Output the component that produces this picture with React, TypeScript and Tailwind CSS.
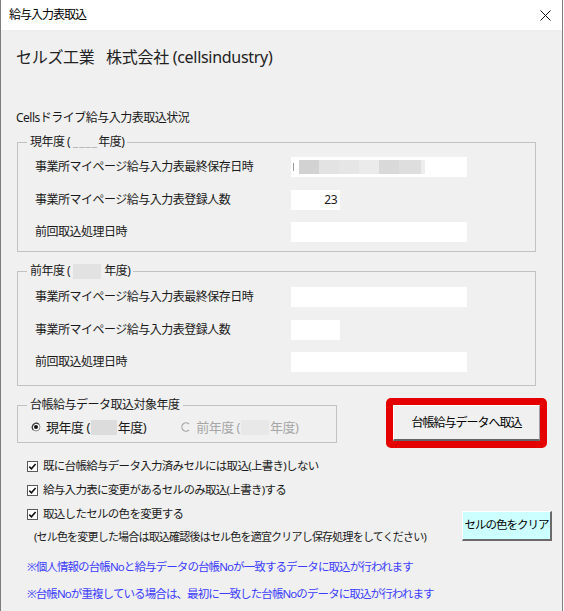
import React, { FC } from 'react';

const CheckIcon: FC = () => (
  <svg width="11" height="11" viewBox="0 0 11 11" className="shrink-0">
    <rect x="0.5" y="0.5" width="10" height="10" fill="#ffffff" stroke="#5a5a5a" />
    <polyline points="2.3,5.6 4.4,7.8 8.6,2.9" fill="none" stroke="#111111" strokeWidth="1.6" />
  </svg>
);

const RadioOn: FC = () => (
  <svg width="10" height="10" viewBox="0 0 10 10" className="shrink-0">
    <circle cx="5" cy="5" r="4" fill="#ffffff" stroke="#8a8a8a" />
    <path d="M 7.8 2.2 A 4 4 0 0 0 2.2 7.8" fill="none" stroke="#3a3a3a" strokeWidth="1.2" />
    <circle cx="5" cy="5" r="2" fill="#111111" />
  </svg>
);

const RadioOff: FC = () => (
  <svg width="10" height="10" viewBox="0 0 10 10" className="shrink-0">
    <path d="M 8 2 A 4.2 4.2 0 1 0 8 8" fill="none" stroke="#a8a8a8" strokeWidth="1.2" />
  </svg>
);

type RowProps = {
  label: string;
  wide?: boolean;
  children?: React.ReactNode;
};

const Row: FC<RowProps> = ({ label, wide = true, children }) => (
  <div className="flex items-center h-[20px]">
    <div className="w-[256px] leading-[16px] whitespace-nowrap">{label}</div>
    <div className={`h-[20px] bg-white flex items-center ${wide ? 'w-[176px]' : 'w-[49px] justify-end pr-[3px]'}`}>
      {children}
    </div>
  </div>
);

const Blur: FC = () => (
  <div className="flex items-center h-[20px] pl-[2px]">
    <div className="w-[1px] h-[8px] bg-[#9a9a9a] mr-[5px]" />
    <div className="flex h-[14px]">
      <div className="w-[20px] bg-[#d2d2d2]" />
      <div className="w-[20px] bg-[#e3e3e3]" />
      <div className="w-[20px] bg-[#e6e6e6]" />
      <div className="w-[20px] bg-[#ebebeb]" />
      <div className="w-[20px] bg-[#d9d9d9]" />
      <div className="w-[22px] bg-[#dedede]" />
      <div className="w-[4px] bg-[#eeeeee]" />
    </div>
  </div>
);

const App: FC = () => {
  return (
    <div className="w-[563px] h-[611px] overflow-hidden border-x border-[#7d7d7d] bg-[#f0f0f0] flex flex-col text-[12px] text-[#1a1a1a] tracking-[-0.5px] font-['Noto_Sans','Noto_Sans_CJK_JP',sans-serif]">
      <div className="h-[30px] shrink-0 bg-white flex items-center justify-between pl-[8px] pr-[11px]">
        <span className="text-[12px] text-black tracking-[-1px]">給与入力表取込</span>
        <svg width="11" height="11" viewBox="0 0 11 11">
          <path d="M0.5 0.5 L10.5 10.5 M10.5 0.5 L0.5 10.5" stroke="#111111" strokeWidth="1" />
        </svg>
      </div>

      <div className="flex flex-col px-[15px]">
        <div className="pt-[17px] text-[16px] leading-[20px] text-[#222] tracking-[-0.3px] whitespace-pre">
          {'セルズ工業   株式会社 (cellsindustry)'}
        </div>

        <div className="mt-[43px] leading-[16px]">Cellsドライブ給与入力表取込状況</div>

        <fieldset className="mt-[8px] ml-[1px] w-[519px] border border-[#c2c2c2] p-0">
          <legend className="ml-[9px] px-[3px] leading-[16px] whitespace-pre">
            {'現年度 ( '}<span className="text-[#b0b0b0] tracking-[1px]">____</span>年度)
          </legend>
          <div className="flex flex-col gap-[12.5px] pl-[17px] pt-[7px] pb-[9px]">
            <Row label="事業所マイページ給与入力表最終保存日時">
              <Blur />
            </Row>
            <Row label="事業所マイページ給与入力表登録人数" wide={false}>
              23
            </Row>
            <Row label="前回取込処理日時" />
          </div>
        </fieldset>

        <fieldset className="mt-[11px] ml-[1px] w-[519px] border border-[#c2c2c2] p-0">
          <legend className="ml-[9px] px-[3px] leading-[16px] flex items-center whitespace-pre">
            {'前年度 ('}<span className="inline-block w-[28px] h-[15px] bg-[#e2e2e2] mx-[3px]" />年度)
          </legend>
          <div className="flex flex-col gap-[12.5px] pl-[17px] pt-[8px] pb-[13px]">
            <Row label="事業所マイページ給与入力表最終保存日時" />
            <Row label="事業所マイページ給与入力表登録人数" wide={false} />
            <Row label="前回取込処理日時" />
          </div>
        </fieldset>

        <div className="mt-[11px] flex items-start">
          <fieldset className="ml-[1px] w-[327px] border border-[#c2c2c2] p-0">
            <legend className="ml-[9px] px-[3px] leading-[16px]">台帳給与データ取込対象年度</legend>
            <div className="flex items-center pl-[13px] pt-[6px] pb-[7px] leading-[16px] text-[13px] whitespace-pre">
              <RadioOn />
              <span className="ml-[5px] flex items-center">
                {'現年度 ('}<span className="inline-block w-[26px] h-[15px] bg-[#dcdcdc] mx-[1px]" />年度)
              </span>
              <span className="ml-[35px] flex items-center text-[#a6a6a6]">
                <RadioOff />
                <span className="ml-[5px] flex items-center">
                  {'前年度 ('}<span className="inline-block w-[28px] h-[15px] bg-[#e8e8e8] mx-[1px]" />年度)
                </span>
              </span>
            </div>
          </fieldset>

          <div className="ml-[49px] mt-[1px] w-[164px] h-[50px] rounded-[5px] bg-[#e50000] p-[7px]">
            <button
              type="button"
              className="w-full h-full bg-[#f0f0f0] border-t border-l border-t-white border-l-white border-r border-r-[#a0a0a0] border-b-2 border-b-[#646464] text-[12px] text-black leading-[16px] whitespace-nowrap tracking-[-1px]"
            >
              台帳給与データへ取込
            </button>
          </div>
        </div>

        <div className="mt-[10px] ml-[11px] flex items-center gap-[5px] leading-[16px] text-[11.5px] tracking-[-0.7px]">
          <CheckIcon />
          <span>既に台帳給与データ入力済みセルには取込(上書き)しない</span>
        </div>
        <div className="mt-[8px] ml-[11px] flex items-center gap-[5px] leading-[16px] text-[11.5px] tracking-[-0.7px]">
          <CheckIcon />
          <span>給与入力表に変更があるセルのみ取込(上書き)する</span>
        </div>

        <div className="mt-[8px] flex items-center">
          <div className="w-[446px] shrink-0 flex flex-col gap-[7px] leading-[16px]">
            <div className="ml-[11px] flex items-center gap-[5px] text-[11.5px] tracking-[-0.7px]">
              <CheckIcon />
              <span>取込したセルの色を変更する</span>
            </div>
            <div className="ml-[18px] whitespace-nowrap text-[11px] tracking-[-0.8px]">
              (セル色を変更した場合は取込確認後はセル色を適宜クリアし保存処理をしてください)
            </div>
          </div>
          <button
            type="button"
            className="w-[90px] h-[30px] shrink-0 bg-[#ccffff] border-t border-l border-t-white border-l-white border-r-2 border-b-2 border-r-[#6a6a6a] border-b-[#6a6a6a] text-[11.5px] text-black leading-[16px] whitespace-nowrap tracking-[-1px]"
          >
            セルの色をクリア
          </button>
        </div>

        <div className="mt-[14px] ml-[11px] leading-[16px] text-[#3c3cff] whitespace-nowrap text-[11.5px] tracking-[-0.9px]">
          ※個人情報の台帳Noと給与データの台帳Noが一致するデータに取込が行われます
        </div>
        <div className="mt-[11px] ml-[11px] leading-[16px] text-[#3c3cff] whitespace-nowrap text-[11.5px] tracking-[-0.9px]">
          ※台帳Noが重複している場合は、最初に一致した台帳Noのデータに取込が行われます
        </div>
      </div>
    </div>
  );
};

export default App;
